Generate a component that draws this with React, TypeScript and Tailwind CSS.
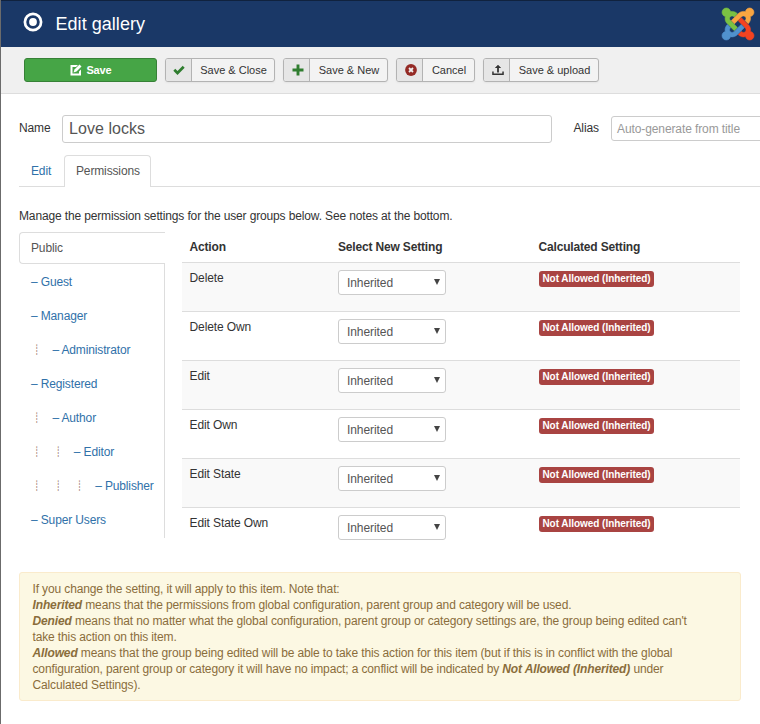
import type { ReactNode } from "react";

const actions = ["Delete", "Delete Own", "Edit", "Edit Own", "Edit State", "Edit State Own"];

const groups = [
  { name: "Guest", depth: 0 },
  { name: "Manager", depth: 0 },
  { name: "Administrator", depth: 1 },
  { name: "Registered", depth: 0 },
  { name: "Author", depth: 1 },
  { name: "Editor", depth: 2 },
  { name: "Publisher", depth: 3 },
  { name: "Super Users", depth: 0 },
];

function JoomlaLogo() {
  return (
    <svg className="overflow-visible" width="32" height="32" viewBox="0 0 448 448">
      <g transform="translate(0 -32)" strokeWidth="8">
        <path fill="#7ac143" stroke="#7ac143" d="M.6 92.1C.6 58.8 27.4 32 60.4 32c30 0 54.5 21.9 59.2 50.2 32.6-7.6 67.1.6 96.5 30l-44.3 44.3c-20.5-20.5-42.6-16.3-55.4-3.5-14.3 14.3-14.3 37.9 0 52.2l99.5 99.5-44 44.3c-87.7-87.2-49.7-49.7-99.8-99.7-26.8-26.5-35-64.8-24.8-98.9C20.4 144.6.6 120.7.6 92.1z" />
        <path fill="#f9a541" stroke="#f9a541" d="M130.1 208.5l44.3 44.3c10-10 89.7-89.7 99.7-99.8 14.3-14.3 37.6-14.3 51.9 0 12.8 12.8 17 35-3.5 55.4l44 44.3c31.2-31.2 38.5-67.6 28.9-101.2 29.2-4.1 51.9-29.2 51.9-59.5 0-33.2-26.8-60.1-59.8-60.1-30.3 0-55.4 22.5-59.5 51.6-33.8-9.9-71.7-1.5-98.3 25.1-18.3 19.1-71.1 71.5-99.6 99.9z" />
        <path fill="#f44321" stroke="#f44321" d="M396.4 360.7c8.2-32.7-.9-68.5-26.3-93.9-11.8-12.2 5 4.7-99.5-99.7l-44.3 44.3 99.7 99.7c14.3 14.3 14.3 37.6 0 51.9-12.8 12.8-35 17-55.4-3.5l-44 44.3c27.6 30.2 68 38.8 102.7 28 5.5 27.4 29.7 48.1 58.9 48.1 33 0 59.8-26.8 59.8-60.1 0-30.2-22.5-55-51.6-59.1z" />
        <path fill="#5091cd" stroke="#5091cd" d="M312.1 307.6l-44-44.3c-87 86.4-50.4 50.4-99.7 99.8-14.3 14.3-37.6 14.3-51.9 0-13.1-13.4-16.9-35.3 3.2-55.4l-44-44.3c-30.2 30.2-38 65.2-29.5 98.3-26.7 6-46.2 29.9-46.2 58.2C0 453.2 26.8 480 59.8 480c28.6 0 52.5-19.8 58.6-46.7 32.7 8.2 68.5-.6 94.2-26 32.1-32.2 12.2-12.4 99.5-99.7z" />
      </g>
    </svg>
  );
}

function ToolButton({ icon, label, className }: { icon: ReactNode; label: string; className: string }) {
  return (
    <button className={`flex h-[24px] shrink-0 overflow-hidden rounded-[3px] border border-[#b3b3b3] bg-[#f3f3f3] text-[11px] tracking-normal text-[#333] shadow-[0_1px_2px_rgba(0,0,0,0.05)] ${className}`}>
      <span className="flex h-full w-[26px] shrink-0 items-center justify-center border-r border-[#b3b3b3] bg-[#e6e6e6]">{icon}</span>
      <span className="flex h-full grow items-center justify-center pl-px whitespace-nowrap">{label}</span>
    </button>
  );
}

export default function App() {
  return (
    <div className="h-[724px] w-[760px] overflow-hidden border-l border-[#6b6b6b] bg-white font-['Liberation_Sans',Arial,sans-serif] text-[12px] leading-4 tracking-[-0.14px] text-[#333]">
      <header className="flex h-[47px] items-center border-t border-[#10223e] bg-[#1a3867] pr-[6px] pl-[22px] text-white">
        <svg className="mb-[4px]" width="20" height="20" viewBox="0 0 20 20">
          <circle cx="10" cy="10" r="8.1" fill="none" stroke="#fff" strokeWidth="2.7" />
          <circle cx="10" cy="10" r="3.9" fill="#fff" />
        </svg>
        <h1 className="ml-[12.5px] text-[18px] leading-6 tracking-[0.04px]">Edit gallery</h1>
        <div className="ml-auto">
          <JoomlaLogo />
        </div>
      </header>

      <div className="flex h-[47px] border-b border-[#ddd] bg-[#f0f0f0] pt-[11px] pl-[23px]">
        <button className="mr-2 flex h-[24px] w-[133px] items-center justify-center gap-[4px] rounded-[3px] border border-[#378137] bg-[#46a546] pl-px text-[11px] font-bold text-white">
          <svg width="12" height="12" viewBox="0 0 12 12">
            <path fill="#fff" d="M.5 1H8L6 3H2.500v6.500H9V7.500L11 5.500v6H.5z" />
            <path fill="#fff" d="M9.500.5l2 2L6.500 7.500 3.500 8.500 4.500 5.500z" />
          </svg>
          Save
        </button>
        <ToolButton className="mr-[8px] w-[110px]" label="Save &amp; Close" icon={
          <svg className="mb-px" width="12" height="12" viewBox="0 0 12 12"><path d="M1.300 5.700l3.200 3.300L10.700 2.700" fill="none" stroke="#2f7d2f" strokeWidth="2.700" /></svg>
        } />
        <ToolButton className="mr-[8px] w-[105px]" label="Save &amp; New" icon={
          <svg className="mb-px ml-[2px]" width="12" height="12" viewBox="0 0 12 12"><path d="M6 .5v11M.5 6h11" fill="none" stroke="#2f7d2f" strokeWidth="2.900" /></svg>
        } />
        <ToolButton className="mr-[8px] w-[79px]" label="Cancel" icon={
          <svg className="mb-px ml-[2px]" width="12" height="12" viewBox="0 0 12 12"><circle cx="6" cy="6" r="5.900" fill="#942a25" /><path d="M4 4l4 4M8 4L4 8" stroke="#eee" strokeWidth="1.800" /></svg>
        } />
        <ToolButton className="w-[116px]" label="Save &amp; upload" icon={
          <svg className="mb-px ml-[2px]" width="12" height="12" viewBox="0 0 12 12"><path fill="#333" d="M6 .8L9.200 4H6.900v4.500H5.100V4H2.800zM.2 7.500h1.500v2h8.600v-2h1.500V11H.2z" /></svg>
        } />
      </div>

      <main className="pl-[18px]">
        <div className="flex items-start pt-[21px]">
          <label className="mt-[5px] w-[43px] shrink-0">Name</label>
          <div className="flex h-[28px] w-[490px] shrink-0 items-center rounded-[3px] border border-[#ccc] pl-[6px] text-[16px] tracking-[0.05px] text-[#555]">Love locks</div>
          <label className="mt-[5px] ml-[21.5px] w-[37.5px] shrink-0">Alias</label>
          <div className="mt-px flex h-[25px] w-[170px] shrink-0 items-center rounded-[3px] border border-[#ccc] pl-[5px] tracking-[-0.1px] text-[#999]">Auto-generate from title</div>
        </div>

        <nav className="mt-[12px] flex h-[32px] w-[760px] border-b border-[#ddd]">
          <a className="w-[45px] pt-[8px] pl-[12px] text-[#3071a9]">Edit</a>
          <a className="h-[32px] w-[87px] rounded-t-[4px] border border-b-0 border-[#ddd] bg-white pt-[7px] pl-[11px] text-[#555]">Permissions</a>
        </nav>

        <p className="mt-[21px]">Manage the permission settings for the user groups below. See notes at the bottom.</p>

        <div className="mt-[8px] flex">
          <ul className="h-[306px] w-[146px]">
            <li className="h-[32px] rounded-l-[4px] border border-r-0 border-[#ddd] pt-[7px] pl-[11px] text-[#555]">Public</li>
            <li className="h-[274px] border-r border-[#ddd] pt-px">
              <ul>
                {groups.map((g) => (
                  <li key={g.name} className="flex h-[34px] items-center pl-[12px] whitespace-nowrap text-[#3071a9]">
                    {Array.from({ length: g.depth }, (_, i) => (
                      <span key={i} className="w-[21.400px] pl-[2.500px] font-['DejaVu_Sans_Mono',monospace] text-[10px] leading-3 text-[#a5857a]">┊</span>
                    ))}
                    <span>– {g.name}</span>
                  </li>
                ))}
              </ul>
            </li>
          </ul>

          <table className="ml-[17px] w-[558px] table-fixed border-collapse text-left">
            <colgroup>
              <col className="w-[149px]" />
              <col className="w-[200px]" />
              <col />
            </colgroup>
            <thead>
              <tr className="h-[30px] tracking-[-0.17px]">
                <th className="pl-[7.500px]">Action</th>
                <th className="pl-[7px]">Select New Setting</th>
                <th className="pl-[7.500px]">Calculated Setting</th>
              </tr>
            </thead>
            <tbody>
              {actions.map((a) => (
                <tr key={a} className="h-[49px] border-t border-[#ddd] align-top odd:bg-[#f9f9f9]">
                  <td className="pt-[7px] pl-[7.500px] tracking-[-0.1px]">{a}</td>
                  <td className="pt-[7px] pl-[7px]">
                    <div className="flex h-[25px] w-[108px] items-center justify-between rounded-[3px] border border-[#ccc] bg-white pt-px pr-[5px] pl-[8px] tracking-[-0.08px] text-[#555]">
                      Inherited
                      <svg className="mb-[2px]" width="6" height="6" viewBox="0 0 6 6"><path fill="#444" d="M0 0h6L3 6z" /></svg>
                    </div>
                  </td>
                  <td className="pt-[8px] pl-[8px]">
                    <span className="flex h-[16px] w-[115px] items-center justify-center rounded-[3px] bg-[#a94442] text-[10px] font-bold tracking-[-0.04px] whitespace-nowrap text-white">Not Allowed (Inherited)</span>
                  </td>
                </tr>
              ))}
            </tbody>
          </table>
        </div>

        <div className="mt-[16px] h-[129px] w-[722px] rounded-[3px] border border-[#faebcc] bg-[#fcf8e3] pt-[8px] pl-[12.500px] tracking-[-0.13px] text-[#8a6d3b]">
          If you change the setting, it will apply to this item. Note that:<br />
          <b><i>Inherited</i></b> means that the permissions from global configuration, parent group and category will be used.<br />
          <b><i>Denied</i></b> means that no matter what the global configuration, parent group or category settings are, the group being edited can't<br />
          take this action on this item.<br />
          <b><i>Allowed</i></b> means that the group being edited will be able to take this action for this item (but if this is in conflict with the global<br />
          configuration, parent group or category it will have no impact; a conflict will be indicated by <b><i>Not Allowed (Inherited)</i></b> under<br />
          Calculated Settings).
        </div>
      </main>
    </div>
  );
}
